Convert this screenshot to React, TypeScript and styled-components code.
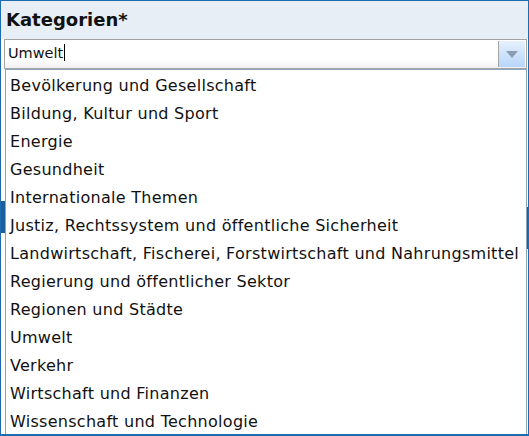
import React from "react";
import styled, { createGlobalStyle } from "styled-components";

const Global = createGlobalStyle`
  html, body { margin: 0; padding: 0; background: #ffffff; overflow: hidden; }
  * { box-sizing: border-box; }
`;

const Frame = styled.div`
  position: relative;
  width: 529px;
  height: 436px;
  border: 1px solid #1e6cb0;
  border-bottom-width: 2px;
  background: #ffffff;
  font-family: "DejaVu Sans", Verdana, sans-serif;
  overflow: hidden;
`;

const Header = styled.div`
  height: 38px;
  background: #e7eef6;
  padding: 7px 0 0 5px;
`;

const Title = styled.h2`
  margin: 0;
  font-size: 18px;
  font-weight: bold;
  color: #111111;
  line-height: 24px;
`;

const Combo = styled.div`
  display: flex;
  height: 30px;
  margin: 0 1px 0 3px;
  border: 1px solid #a3a3a3;
  background: linear-gradient(#ffffff 70%, #f0f0f0);
`;

const Input = styled.div`
  flex: 1;
  display: flex;
  align-items: center;
  padding: 0 0 3px 3px;
  font-size: 14.5px;
  color: #111111;
`;

const Caret = styled.span`
  display: inline-block;
  width: 1px;
  height: 17px;
  margin-left: 1px;
  background: #000000;
`;

const DropButton = styled.div`
  width: 27px;
  display: flex;
  align-items: center;
  justify-content: center;
  border-left: 1px solid #a3a3a3;
  background: linear-gradient(#e6f1fd, #b7d6fb);
  margin: 1px;
`;

const Behind = styled.div`
  display: flex;
  justify-content: space-between;
  align-items: flex-start;
`;

const BehindBar = styled.div<{ $top: number; $h: number }>`
  width: 4px;
  margin-top: ${(p) => p.$top}px;
  height: ${(p) => p.$h}px;
  background: #1b5f9e;
`;

const List = styled.ul`
  position: absolute;
  left: 4px;
  top: 68px;
  width: 522px;
  height: 366px;
  margin: 0;
  padding: 2px 0 0;
  list-style: none;
  background: #ffffff;
  border: 1px solid #8aa4c2;
  border-bottom: none;
`;

const Item = styled.li`
  height: 28px;
  line-height: 28px;
  padding-left: 4px;
  font-size: 16px;
  letter-spacing: 0.28px;
  color: #111111;
  white-space: nowrap;
`;

const items = [
  "Bevölkerung und Gesellschaft",
  "Bildung, Kultur und Sport",
  "Energie",
  "Gesundheit",
  "Internationale Themen",
  "Justiz, Rechtssystem und öffentliche Sicherheit",
  "Landwirtschaft, Fischerei, Forstwirtschaft und Nahrungsmittel",
  "Regierung und öffentlicher Sektor",
  "Regionen und Städte",
  "Umwelt",
  "Verkehr",
  "Wirtschaft und Finanzen",
  "Wissenschaft und Technologie",
];

export default function App() {
  return (
    <>
      <Global />
      <Frame>
        <Header>
          <Title>Kategorien*</Title>
        </Header>
        <Combo>
          <Input>
            Umwelt
            <Caret />
          </Input>
          <DropButton>
            <svg width="12" height="7" viewBox="0 0 12 7">
              <path d="M0 0 H12 L6 7 Z" fill="#8c9cb3" />
            </svg>
          </DropButton>
        </Combo>
        <Behind>
          <BehindBar $top={132} $h={32} />
          <BehindBar $top={138} $h={42} />
        </Behind>
        <List>
          {items.map((t) => (
            <Item key={t}>{t}</Item>
          ))}
        </List>
      </Frame>
    </>
  );
}
